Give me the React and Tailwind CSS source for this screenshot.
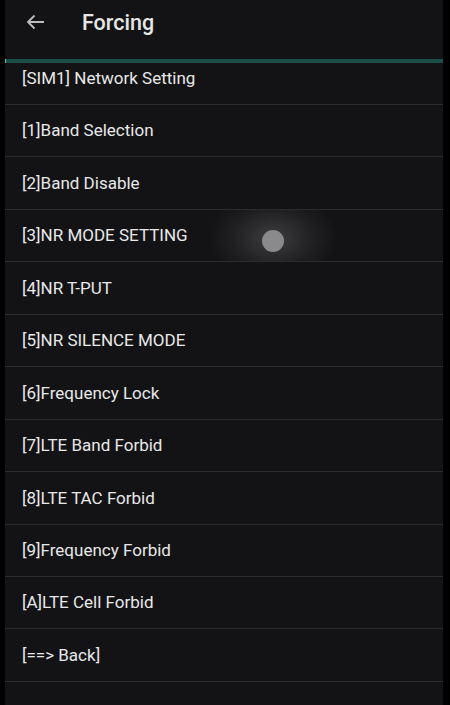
import React from 'react';

const items = [
    '[1]Band Selection',
    '[2]Band Disable',
    '[3]NR MODE SETTING',
    '[4]NR T-PUT',
    '[5]NR SILENCE MODE',
    '[6]Frequency Lock',
    '[7]LTE Band Forbid',
    '[8]LTE TAC Forbid',
    '[9]Frequency Forbid',
    '[A]LTE Cell Forbid',
    '[==> Back]',
];

const App = () => {
    return (
        <div className="flex h-[705px] w-[450px] overflow-hidden bg-black font-['Roboto',sans-serif]">
            <div className="ml-[5px] flex w-[438px] flex-col bg-[#131315]">
                {/* Toolbar */}
                <div className="flex h-[59px] shrink-0 items-start pt-[10px]">
                    <svg width="20" height="20" viewBox="0 0 20 20" className="ml-[20px] mt-[2px]" fill="none" stroke="#bdbdbd" strokeWidth="1.8">
                        <path d="M19 10H3M9.5 3.5 3 10l6.5 6.5" />
                    </svg>
                    <span className="ml-[37px] text-[21.5px] leading-[26px] font-medium text-[#e6e6e6]">Forcing</span>
                </div>
                <div className="flex h-[4px] shrink-0">
                    <div className="w-[1px] bg-[#20d8c8]" />
                    <div className="flex-1 bg-[#1c4f4a]" />
                </div>

                {/* List, scrolled a little under the toolbar */}
                <div className="flex-1 overflow-hidden">
                    <div className="flex h-[42px] items-center border-b border-[#2c2c2e] pb-[10px] pl-[17px] text-[17px] text-[#e8e8e8]">
                        [SIM1] Network Setting
                    </div>
                    {items.map((t, i) => (
                        <div key={t} className="relative flex h-[52.45px] items-center overflow-hidden border-b border-[#2c2c2e] pl-[17px] pt-[1px] text-[17px] text-[#e8e8e8]">
                            {t}
                            {i === 2 && (
                                <>
                                    <div className="absolute left-[203px] top-[-17px] h-[90px] w-[130px] rounded-full bg-[radial-gradient(ellipse,rgba(150,150,150,0.32)_0%,rgba(120,120,120,0.12)_45%,rgba(0,0,0,0)_70%)]" />
                                    <div className="absolute left-[257px] top-[20px] h-[22px] w-[22px] rounded-full bg-[#8a8a8c]" />
                                </>
                            )}
                        </div>
                    ))}
                </div>
            </div>
        </div>
    );
};

export default App;
